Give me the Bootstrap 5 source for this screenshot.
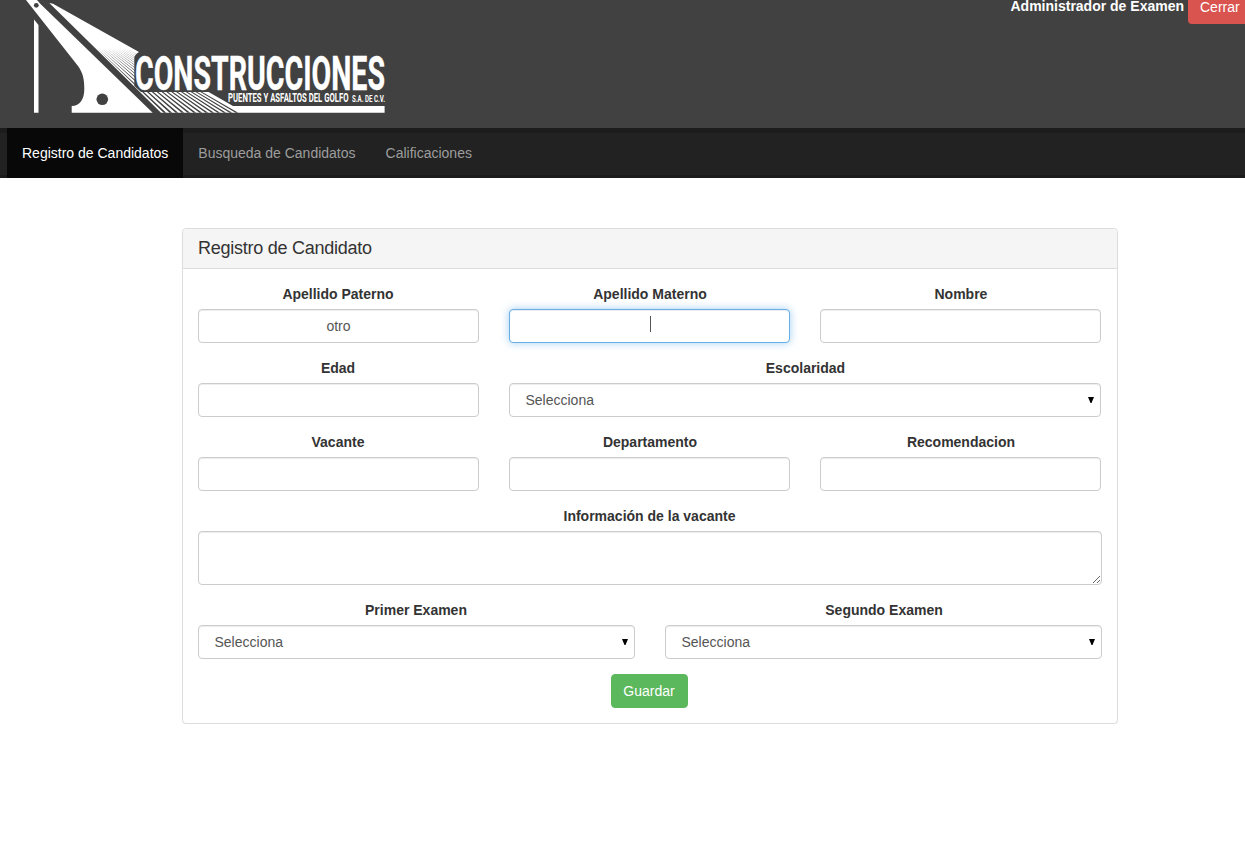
<!DOCTYPE html>
<html lang="es">
<head>
<meta charset="utf-8">
<meta name="viewport" content="width=device-width, initial-scale=1">
<title>Registro de Candidatos</title>
<link href="https://cdn.jsdelivr.net/npm/bootstrap@5.3.0/dist/css/bootstrap.min.css" rel="stylesheet">
<style>
body{font-family:"Liberation Sans",Arial,sans-serif;font-size:14px;line-height:20px;color:#333;overflow:hidden}
.site-header{height:128px;background:#414141}
.logo-art{width:700px;height:128px;flex:none}
.logo-art text{font-family:Roboto,sans-serif;font-weight:700}
.session{gap:4px}
.session strong{line-height:12px}
.btn{font-size:14px;line-height:20px;padding:6px 12px;border-radius:4px}
.btn-danger{width:57px;height:24px;padding:0 0 0 12px;line-height:14px;background:#d9534f;border:0;border-radius:0 0 0 4px;text-align:left;display:flex;align-items:flex-start}
.btn-success{background:#5cb85c;border-color:#5cb85c;width:77px;padding:6px 0}
.save-row{margin-right:2px}
.main-nav{height:50px;background:#222;padding:0 7px;box-shadow:inset 0 5px 0 #1c1c1c,inset 0 -3px 0 #1c1c1c}
.main-nav .nav-link{color:#9d9d9d;padding:15px;line-height:20px}
.main-nav .nav-link.active{color:#fff;background:#080808}
.panel{width:936px;margin:50px 0 0 182px;border-color:#ddd;border-radius:4px;box-shadow:0 1px 1px rgba(0,0,0,.05)}
.panel .card-header{height:40px;padding:9px 15px;background:#f5f5f5;border-color:#ddd;font-size:18px;line-height:20px;letter-spacing:-.26px}
.panel .card-body{padding:15px}
.panel .row{--bs-gutter-x:30px;margin-bottom:15px}
.panel .thirds{margin-right:-14px}
.form-label{display:block;font-weight:700;margin:0 1px 5px 0;text-align:center}
.row>div+div .form-label{margin:0 0 5px 1px}
.form-control,.form-select{height:34px;padding:6px 12px;font-size:14px;line-height:20px;color:#555;border:1px solid #ccc;border-radius:4px;box-shadow:inset 0 1px 1px rgba(0,0,0,.075)}
.form-select{padding-left:15.5px;background-image:url("data:image/svg+xml,%3Csvg xmlns='http://www.w3.org/2000/svg' width='6' height='6'%3E%3Cpath d='M0 0H6L3.5 6H2.5Z'/%3E%3C/svg%3E");background-size:6px 6px;background-position:right 6px center}
textarea.form-control{height:54px;min-height:54px;display:block}
.is-focused{border-color:#66afe9;box-shadow:inset 0 1px 1px rgba(0,0,0,.075),0 0 8px rgba(102,175,233,.6)}
.caret-bar{position:absolute;left:50%;top:7px;width:1px;height:16px;margin-left:1px;background:#555}
</style>
</head>
<body>
<header class="site-header d-flex justify-content-between align-items-start">
<svg class="logo-art" viewBox="0 0 700 128" fill="#fff">
<path d="M34 19.5 38.5 25V112.7H34Z"/>
<path d="M26 0H37L40.5 4 152.7 112.7H71.7V106C80 106 84.3 99 84.3 89 84.3 79 83 73 78 66Z"/>
<g fill="#414141"><circle cx="36.3" cy="5.3" r="2.4"/><circle cx="102.3" cy="99.3" r="5.8"/></g>
<!-- Cable fan and base bar -->
<path d="M49.3 3 53 3.7 139 52 233 106H384.6V112.7H161Z"/>
<path fill="#414141" d="M96 47.5 163.6 112.7H166.2ZM98.4 47.5 169.6 112.7H172.2ZM100.8 47.5 175.6 112.7H178.2ZM103.2 47.5 181.6 112.7H184.2ZM105.6 47.5 187.6 112.7H190.2ZM108 47.5 193.6 112.7H196.2ZM110.4 47.5 199.6 112.7H202.2ZM112.8 47.5 205.6 112.7H208.2ZM115.2 47.5 211.6 112.7H214.2ZM117.6 47.5 217.6 112.7H220.2ZM120 47.5 223.6 112.7H226.2ZM122.4 47.5 229.6 112.7H232.2ZM124.8 47.5 235.6 112.7H238.2Z"/>
<path fill="#414141" d="M139 52H387V92H141L134.3 86V58Q134.3 55 139 52Z"/>
<text x="135" y="89.6" font-size="47.5" textLength="250" lengthAdjust="spacingAndGlyphs" stroke="#fff" stroke-width=".4">CONSTRUCCIONES</text>
<text x="228" y="102.4" font-size="12.8" textLength="120.5" lengthAdjust="spacingAndGlyphs">PUENTES Y ASFALTOS DEL GOLFO</text>
<text x="352" y="102.4" font-size="9" textLength="33" lengthAdjust="spacingAndGlyphs">S.A. DE C.V.</text>
</svg>
<div class="session d-flex align-items-start text-nowrap"><strong class="text-white">Administrador de Examen</strong><button class="btn btn-danger">Cerrar</button></div>
</header>
<nav class="main-nav nav"><a class="nav-link active" href="#">Registro de Candidatos</a><a class="nav-link" href="#">Busqueda de Candidatos</a><a class="nav-link" href="#">Calificaciones</a></nav>
<main class="card panel">
<div class="card-header">Registro de Candidato</div>
<form class="card-body">
<div class="row thirds"><div class="col-4"><label class="form-label">Apellido Paterno</label><input class="form-control text-center" value="otro"></div><div class="col-4"><label class="form-label">Apellido Materno</label><div class="position-relative"><input class="form-control text-center is-focused"><span class="caret-bar"></span></div></div><div class="col-4"><label class="form-label">Nombre</label><input class="form-control"></div></div>
<div class="row thirds"><div class="col-4"><label class="form-label">Edad</label><input class="form-control"></div><div class="col-8"><label class="form-label">Escolaridad</label><select class="form-select"><option>Selecciona</option></select></div></div>
<div class="row thirds"><div class="col-4"><label class="form-label">Vacante</label><input class="form-control"></div><div class="col-4"><label class="form-label">Departamento</label><input class="form-control"></div><div class="col-4"><label class="form-label">Recomendacion</label><input class="form-control"></div></div>
<div class="row"><div class="col-12"><label class="form-label">Información de la vacante</label><textarea class="form-control"></textarea></div></div>
<div class="row"><div class="col-6"><label class="form-label">Primer Examen</label><select class="form-select"><option>Selecciona</option></select></div><div class="col-6"><label class="form-label">Segundo Examen</label><select class="form-select"><option>Selecciona</option></select></div></div>
<div class="save-row"><button type="button" class="btn btn-success d-block mx-auto">Guardar</button></div>
</form>
</main>
</body>
</html>
